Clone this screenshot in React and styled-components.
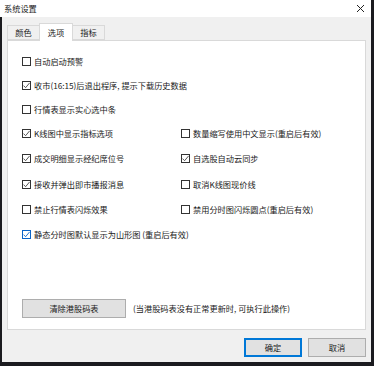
import React from "react";
import styled, { createGlobalStyle } from "styled-components";

const GlobalStyle = createGlobalStyle`
  html, body {
    margin: 0;
    padding: 0;
    background: #1b1b1f;
    overflow: hidden;
  }
  body {
    width: 374px;
    height: 366px;
    font-family: "Noto Sans CJK SC", "Noto Sans", sans-serif;
    font-size: 8.2px;
    color: #1a1a1a;
  }
`;

const options = [
  { left: { label: "自动启动预警", checked: false } },
  { left: { label: "收市(16:15)后退出程序, 提示下载历史数据", checked: true } },
  { left: { label: "行情表显示实心选中条", checked: false } },
  {
    left: { label: "K线图中显示指标选项", checked: true },
    right: { label: "数量缩写使用中文显示(重启后有效)", checked: false },
  },
  {
    left: { label: "成交明细显示经纪席位号", checked: true },
    right: { label: "自选股自动云同步", checked: true },
  },
  {
    left: { label: "接收并弹出即市播报消息", checked: true },
    right: { label: "取消K线图现价线", checked: false },
  },
  {
    left: { label: "禁止行情表闪烁效果", checked: false },
    right: { label: "禁用分时图闪烁圆点(重启后有效)", checked: false },
  },
  { left: { label: "静态分时图默认显示为山形图 (重启后有效)", checked: true, focus: true } },
];

const Check = ({ label, checked, focus }) => (
  <CheckLabel>
    <Box $focus={focus}>
      {checked && (
        <svg width="9" height="9" viewBox="0 0 9 9">
          <path
            d="M1.5 4.6 L3.6 6.7 L7.6 1.9"
            fill="none"
            stroke={focus ? "#0a64c8" : "#444"}
            strokeWidth="0.9"
          />
        </svg>
      )}
    </Box>
    <span>{label}</span>
  </CheckLabel>
);

export default function App() {
  return (
    <>
      <GlobalStyle />
      <Window>
        <TitleBar>
          <span>系统设置</span>
          <svg width="9" height="9" viewBox="0 0 9 9">
            <path d="M1 1 L8 8 M8 1 L1 8" stroke="#222" strokeWidth="1" />
          </svg>
        </TitleBar>
        <Body>
          <Tabs>
            <Tab>颜色</Tab>
            <Tab $active>选项</Tab>
            <Tab>指标</Tab>
          </Tabs>
          <Panel>
            <OptionGrid>
              {options.map((row, i) =>
                row.right ? (
                  <React.Fragment key={i}>
                    <Cell>
                      <Check {...row.left} />
                    </Cell>
                    <Cell>
                      <Check {...row.right} />
                    </Cell>
                  </React.Fragment>
                ) : (
                  <Cell key={i} $wide>
                    <Check {...row.left} />
                  </Cell>
                )
              )}
            </OptionGrid>
            <ClearRow>
              <Button $width="104px">清除港股码表</Button>
              <Hint>(当港股码表没有正常更新时, 可执行此操作)</Hint>
            </ClearRow>
          </Panel>
          <Footer>
            <Button $width="58px" $primary>
              确定
            </Button>
            <Button $width="58px">取消</Button>
          </Footer>
        </Body>
      </Window>
    </>
  );
}

const Window = styled.div`
  width: 371px;
  height: 362px;
  display: flex;
  flex-direction: column;
`;

const TitleBar = styled.div`
  height: 17px;
  flex: none;
  background: #fff;
  display: flex;
  align-items: center;
  justify-content: space-between;
  padding: 0 6px 1px 4px;
  box-sizing: border-box;
  line-height: 1;
`;

const Body = styled.div`
  flex: 1;
  margin-left: 2px;
  background: #f0f0f0;
  padding: 6px 5px 0 5px;
  display: flex;
  flex-direction: column;
`;

const Tabs = styled.div`
  height: 17px;
  display: flex;
  align-items: flex-end;
  position: relative;
  z-index: 1;
`;

const Tab = styled.div`
  box-sizing: border-box;
  height: ${(p) => (p.$active ? "18px" : "15px")};
  margin-bottom: ${(p) => (p.$active ? "-1px" : "0")};
  padding: 0 6px;
  display: flex;
  align-items: center;
  justify-content: center;
  width: ${(p) => (p.$active ? "34px" : "33px")};
  background: ${(p) => (p.$active ? "#fff" : "#f0f0f0")};
  border: 1px solid #d9d9d9;
  border-bottom: ${(p) => (p.$active ? "none" : "1px solid #d9d9d9")};
  margin-left: ${(p) => (p.$active ? "-1px" : "0")};
  margin-right: ${(p) => (p.$active ? "-1px" : "0")};
  line-height: 1;
`;

const Panel = styled.div`
  height: 290px;
  box-sizing: border-box;
  background: #fff;
  border: 1px solid #d9d9d9;
  padding: 8px 0 11px 14px;
  display: flex;
  flex-direction: column;
`;

const OptionGrid = styled.div`
  display: grid;
  grid-template-columns: 159px 1fr;
  grid-template-rows: 24px 24px 24px 24px 26px 26px 25px 25px;
`;

const Cell = styled.div`
  grid-column: ${(p) => (p.$wide ? "1 / span 2" : "auto")};
  display: flex;
  align-items: center;
`;

const CheckLabel = styled.label`
  display: flex;
  align-items: center;
  gap: 3px;
  white-space: nowrap;
  line-height: 1;
`;

const Box = styled.span`
  width: 9px;
  height: 9px;
  box-sizing: border-box;
  border: 1px solid ${(p) => (p.$focus ? "#0a64c8" : "#333")};
  background: #fff;
  display: flex;
  align-items: center;
  justify-content: center;
  svg {
    flex: none;
  }
`;

const ClearRow = styled.div`
  margin-top: auto;
  display: flex;
  align-items: center;
  gap: 7px;
`;

const Button = styled.div`
  width: ${(p) => p.$width};
  height: 19px;
  box-sizing: border-box;
  background: #e1e1e1;
  border: ${(p) => (p.$primary ? "1px solid #0078d7" : "1px solid #adadad")};
  box-shadow: ${(p) => (p.$primary ? "inset 0 0 0 1px #0078d7" : "none")};
  display: flex;
  align-items: center;
  justify-content: center;
  line-height: 1;
`;

const Hint = styled.span`
  white-space: nowrap;
  line-height: 1;
`;

const Footer = styled.div`
  display: flex;
  justify-content: flex-end;
  gap: 6px;
  padding-top: 8px;
`;
